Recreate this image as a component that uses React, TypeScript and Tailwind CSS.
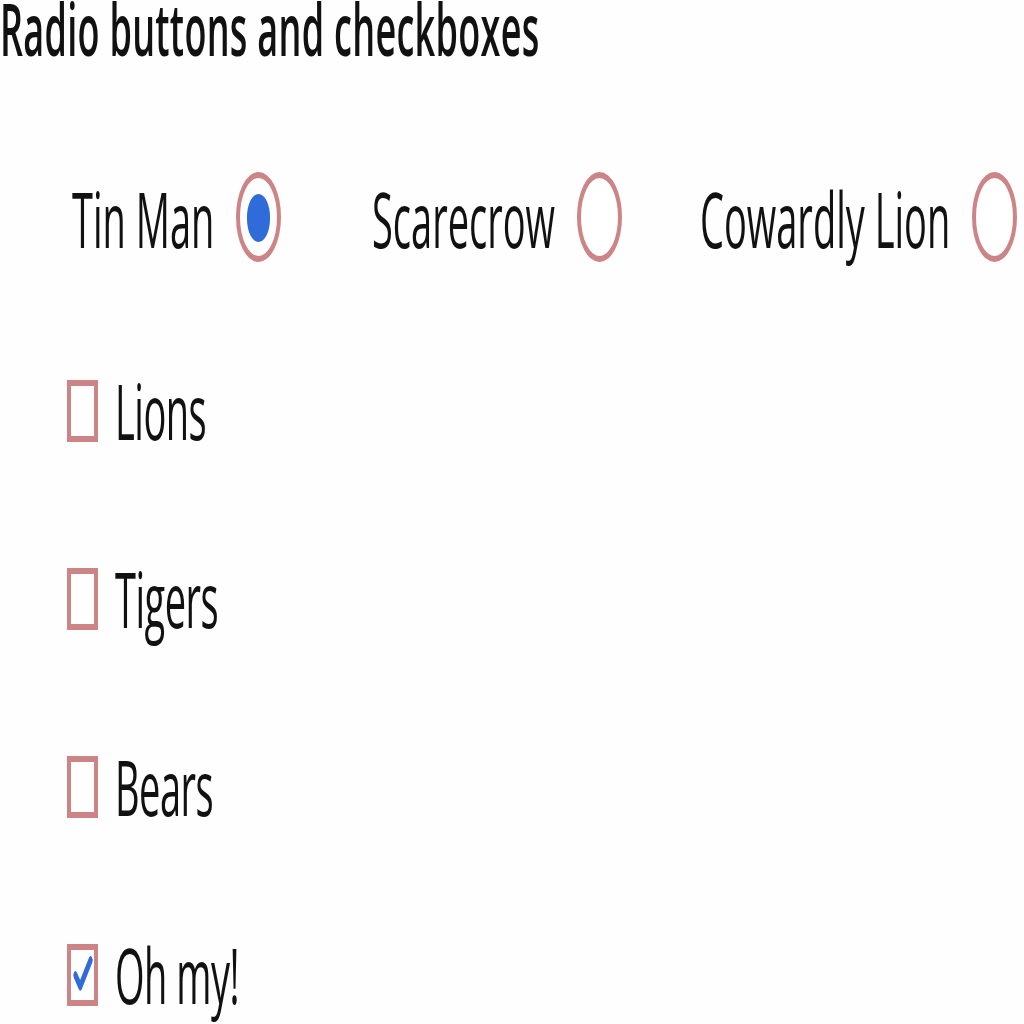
import { useState } from "react";

const radios = ["Tin Man", "Scarecrow", "Cowardly Lion"];
const boxes = ["Lions", "Tigers", "Bears", "Oh my!"];

function Radio({ checked }: { checked: boolean }) {
  return (
    <span className="flex h-[45px] w-[45px] shrink-0 items-center justify-center rounded-full border-x-[4px] border-y-[3px] border-[#cc8487] bg-white">
      {checked && <span className="h-[24px] w-[23px] rounded-full bg-[#2f6bd9]" />}
    </span>
  );
}

function Checkbox({ checked }: { checked: boolean }) {
  return (
    <span className="flex h-[31px] w-[31px] shrink-0 items-center justify-center border-x-[4px] border-y-[3px] border-[#cc8487] bg-white">
      {checked && (
        <svg viewBox="0 0 16 16" className="h-[22px] w-[22px]" fill="none" stroke="#2f6bd9" strokeWidth="3" strokeLinecap="round" strokeLinejoin="round">
          <path d="M2.5 8.5 6 12.5 13.5 3" />
        </svg>
      )}
    </span>
  );
}

export default function App() {
  const [hero, setHero] = useState("Tin Man");
  const [checked, setChecked] = useState<string[]>(["Oh my!"]);

  const toggle = (name: string) =>
    setChecked((c) => (c.includes(name) ? c.filter((x) => x !== name) : [...c, name]));

  return (
    <main className="h-[1024px] w-[1024px] overflow-hidden bg-[#fefefe] text-[#111]" style={{ fontFamily: '"Open Sans", "Noto Sans", sans-serif' }}>
      {/* the whole screen is drawn twice as tall as it is wide */}
      <div className="flex h-[512px] w-[1024px] origin-top-left scale-y-[2] flex-col">
        <h1 className="-mt-[3px] text-[36px] leading-[36px] font-semibold tracking-[0.3px]">Radio buttons and checkboxes</h1>

        {/* ================= RADIOS ================= */}
        <div className="mt-[53px] flex items-center pl-[72px]">
          {radios.map((name, i) => (
            <label
              key={name}
              onClick={() => setHero(name)}
              className={
                "flex cursor-pointer items-center gap-[22px] " +
                (i === 0 ? "w-[300px]" : i === 1 ? "w-[328px]" : "")
              }
            >
              <span className="text-[38px] leading-[44px] tracking-[0px]">{name}</span>
              <Radio checked={hero === name} />
            </label>
          ))}
        </div>

        {/* ================= CHECKBOXES ================= */}
        <div className="mt-[52px] flex flex-col gap-[50px] pl-[67px]">
          {boxes.map((name) => (
            <label key={name} onClick={() => toggle(name)} className="flex h-[44px] cursor-pointer items-center gap-[17px]">
              <Checkbox checked={checked.includes(name)} />
              <span className="text-[38px] leading-[44px] tracking-[-0.5px]">{name}</span>
            </label>
          ))}
        </div>
      </div>
    </main>
  );
}
